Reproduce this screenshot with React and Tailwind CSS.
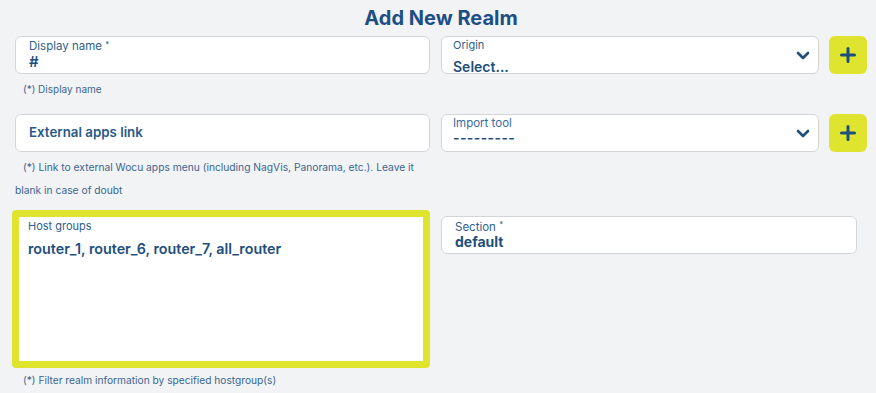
import React from "react";

const Chevron = () => (
  <svg width="14" height="9" viewBox="0 0 14 9" className="shrink-0">
    <path d="M2 2l5 5 5-5" fill="none" stroke="#1e4f7d" strokeWidth="2.6" strokeLinecap="round" strokeLinejoin="round" />
  </svg>
);

const PlusBtn = () => (
  <button className="w-[38px] h-[38px] shrink-0 rounded-[6px] bg-[#dfe52e] flex items-center justify-center">
    <svg width="16" height="16" viewBox="0 0 16 16">
      <path d="M8 1.5v13M1.5 8h13" fill="none" stroke="#1e4f7d" strokeWidth="3" strokeLinecap="round" />
    </svg>
  </button>
);

export default function App() {
  return (
    <div className="w-[876px] h-[393px] overflow-hidden bg-[#f2f3f5] text-[#1e4f7d]" style={{ fontFamily: "Inter, 'Noto Sans', sans-serif" }}>
      <div className="h-[36px] flex justify-center pt-[5px] pl-[6px]">
        <h1 className="text-[20px] leading-[26px] font-bold text-[#1d4f85]">Add New Realm</h1>
      </div>

      <div className="pl-[15px] flex flex-col">
        {/* Row 1 */}
        <div className="flex gap-[11px] h-[78px]">
          <div className="w-[415px] flex flex-col">
            <div className="h-[38px] rounded-[6px] border border-[#d3d5d8] bg-white pl-[13px] pt-[3px]">
              <div className="text-[11.5px] leading-[13px] text-[#2f5f8e]">Display name <span className="text-[8px] align-top leading-[8px]">*</span></div>
              <div className="text-[15px] leading-[16px] font-semibold mt-[1px]">#</div>
            </div>
            <div className="text-[10px] leading-[14px] pl-[8px] mt-[8px] text-[#3b6690]">(*) Display name</div>
          </div>
          <div className="w-[426px] flex gap-[10px]">
            <div className="flex-1 h-[38px] rounded-[6px] border border-[#d3d5d8] bg-white pl-[11px] pr-[8px] flex items-center">
              <div className="flex-1 flex flex-col self-start pt-[1px]">
                <div className="text-[11px] leading-[14px] text-[#2f5f8e]">Origin</div>
                <div className="text-[14px] leading-[16px] font-semibold mt-[7px]">Select...</div>
              </div>
              <Chevron />
            </div>
            <PlusBtn />
          </div>
        </div>

        {/* Row 2 */}
        <div className="flex gap-[11px] h-[96px]">
          <div className="w-[415px] flex flex-col">
            <div className="h-[38px] rounded-[6px] border border-[#d3d5d8] bg-white pl-[13px] flex items-center">
              <div className="text-[13.3px] font-semibold text-[#2a5a88]">External apps link</div>
            </div>
            <div className="text-[10.25px] leading-[23px] mt-[4px] indent-[8px] text-[#3b6690] pr-[6px]">(*) Link to external Wocu apps menu (including NagVis, Panorama, etc.). Leave it blank in case of doubt</div>
          </div>
          <div className="w-[426px] flex gap-[10px]">
            <div className="flex-1 h-[38px] rounded-[6px] border border-[#d3d5d8] bg-white pl-[11px] pr-[8px] flex items-center">
              <div className="flex-1 flex flex-col self-start pt-[1px]">
                <div className="text-[11.5px] leading-[14px] text-[#3a6aa0]">Import tool</div>
                <div className="text-[14px] leading-[16px] font-semibold tracking-[0.4px]">---------</div>
              </div>
              <Chevron />
            </div>
            <PlusBtn />
          </div>
        </div>

        {/* Row 3 */}
        <div className="flex gap-[11px]">
          <div className="w-[415px] flex flex-col">
            <div className="ml-[-3px] w-[418px] h-[158px] rounded-[4px] border-[7px] border-[#dfe52e] bg-white pl-[9px] pt-[2px]">
              <div className="text-[11px] leading-[14px] text-[#2f5f8e]">Host groups</div>
              <div className="text-[14.3px] leading-[16px] font-semibold mt-[8px]">router_1, router_6, router_7, all_router</div>
            </div>
            <div className="text-[10.2px] leading-[14px] pl-[8px] mt-[5px] text-[#3b6690]">(*) Filter realm information by specified hostgroup(s)</div>
          </div>
          <div className="w-[416px] mt-[6px]">
            <div className="h-[38px] rounded-[6px] border border-[#d3d5d8] bg-white pl-[13px] pt-[3px]">
              <div className="text-[11.5px] leading-[14px] text-[#2f5f8e]">Section <span className="text-[8px] align-top leading-[8px]">*</span></div>
              <div className="text-[14px] leading-[16px] font-bold">default</div>
            </div>
          </div>
        </div>
      </div>
    </div>
  );
}
